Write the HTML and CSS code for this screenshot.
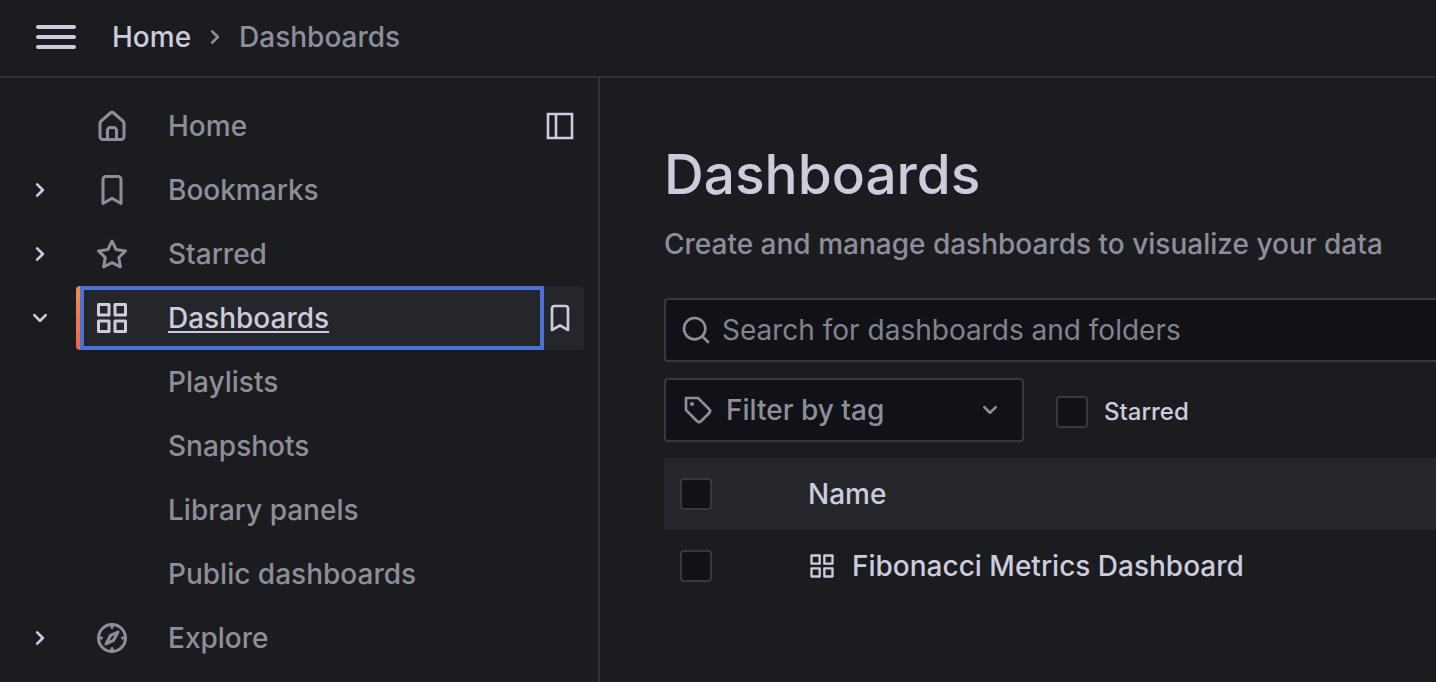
FILE: index.html
```html
<!DOCTYPE html>
<html lang="en">
<head>
<meta charset="utf-8">
<title>Dashboards</title>
<link rel="stylesheet" href="styles.css">
</head>
<body>
<svg class="sprite" aria-hidden="true">
  <symbol id="right" viewBox="0 0 24 24"><path d="M14.83,11.29,10.59,7.05a1,1,0,0,0-1.42,0,1,1,0,0,0,0,1.41L12.71,12,9.17,15.54a1,1,0,0,0,0,1.41,1,1,0,0,0,.71.29,1,1,0,0,0,.71-.29l4.24-4.24A1,1,0,0,0,14.83,11.29Z"/></symbol>
  <symbol id="down" viewBox="0 0 24 24"><path d="M17,9.17a1,1,0,0,0-1.41,0L12,12.71,8.46,9.17a1,1,0,0,0-1.41,0,1,1,0,0,0,0,1.42l4.24,4.24a1,1,0,0,0,1.42,0L17,10.59A1,1,0,0,0,17,9.17Z"/></symbol>
  <symbol id="home" viewBox="0 0 24 24"><path d="M20,8h0L14,2.74a3,3,0,0,0-4,0L4,8a3,3,0,0,0-1,2.26V19a3,3,0,0,0,3,3H18a3,3,0,0,0,3-3V10.25A3,3,0,0,0,20,8ZM14,20H10V15a1,1,0,0,1,1-1h2a1,1,0,0,1,1,1Zm5-1a1,1,0,0,1-1,1H16V15a3,3,0,0,0-3-3H11a3,3,0,0,0-3,3v5H6a1,1,0,0,1-1-1V10.25a1,1,0,0,1,.34-.75l6-5.25a1,1,0,0,1,1.32,0l6,5.25a1,1,0,0,1,.34.75Z"/></symbol>
  <symbol id="bookmark" viewBox="0 0 24 24"><path d="M16,2H8A3,3,0,0,0,5,5V21a1,1,0,0,0,.5.87,1,1,0,0,0,1,0L12,18.69l5.5,3.18A1,1,0,0,0,18,22a1,1,0,0,0,.5-.13A1,1,0,0,0,19,21V5A3,3,0,0,0,16,2Zm1,17.27-4.5-2.6a1,1,0,0,0-1,0L7,19.27V5A1,1,0,0,1,8,4h8a1,1,0,0,1,1,1Z"/></symbol>
  <symbol id="star" viewBox="0 0 24 24"><path d="M22,9.67A1,1,0,0,0,21.14,9l-5.69-.83L12.9,3a1,1,0,0,0-1.8,0L8.55,8.16,2.86,9a1,1,0,0,0-.81.68,1,1,0,0,0,.25,1l4.13,4-1,5.68A1,1,0,0,0,6.9,21.44L12,18.77l5.1,2.67a.93.93,0,0,0,.46.12,1,1,0,0,0,.59-.19,1,1,0,0,0,.4-1l-1-5.68,4.13-4A1,1,0,0,0,22,9.67Zm-6.15,4a1,1,0,0,0-.29.88l.72,4.2-3.76-2a1.06,1.06,0,0,0-.94,0l-3.76,2,.72-4.2a1,1,0,0,0-.29-.88l-3-3,4.21-.61a1,1,0,0,0,.76-.55L12,5.7l1.88,3.82a1,1,0,0,0,.76.55l4.21.61Z"/></symbol>
  <symbol id="apps" viewBox="0 0 24 24"><path d="M10,13H3a1,1,0,0,0-1,1v7a1,1,0,0,0,1,1h7a1,1,0,0,0,1-1V14A1,1,0,0,0,10,13ZM9,20H4V15H9ZM21,2H14a1,1,0,0,0-1,1v7a1,1,0,0,0,1,1h7a1,1,0,0,0,1-1V3A1,1,0,0,0,21,2ZM20,9H15V4h5Zm1,4H14a1,1,0,0,0-1,1v7a1,1,0,0,0,1,1h7a1,1,0,0,0,1-1V14A1,1,0,0,0,21,13Zm-1,7H15V15h5ZM10,2H3A1,1,0,0,0,2,3v7a1,1,0,0,0,1,1h7a1,1,0,0,0,1-1V3A1,1,0,0,0,10,2ZM9,9H4V4H9Z"/></symbol>
  <symbol id="compass" viewBox="0 0 24 24"><g fill="none" stroke="currentColor" stroke-width="2" stroke-linejoin="round" stroke-linecap="round"><circle cx="12" cy="12" r="9"/><path d="M12 3v2M12 19v2M3 12h2M19 12h2M16 8 11 10.3 8 16 13 13.6Z"/></g></symbol>
  <symbol id="search" viewBox="0 0 24 24"><path d="M21.71,20.29,18,16.61A9,9,0,1,0,16.61,18l3.68,3.68a1,1,0,0,0,1.42,0A1,1,0,0,0,21.71,20.29ZM11,18a7,7,0,1,1,7-7A7,7,0,0,1,11,18Z"/></symbol>
  <symbol id="tag" viewBox="0 0 24 24"><path d="M7.5,6A1.5,1.5,0,1,0,9,7.5,1.5,1.5,0,0,0,7.5,6Zm13.62,4.71L12.71,2.29A1,1,0,0,0,12,2H3A1,1,0,0,0,2,3v9a1,1,0,0,0,.29.71l8.42,8.41a3,3,0,0,0,4.24,0L21.12,15a3,3,0,0,0,0-4.24Zm-1.41,2.82h0l-6.18,6.17a1,1,0,0,1-1.41,0L4,11.59V4h7.59l8.12,8.12a1,1,0,0,1,.29.71A1,1,0,0,1,19.71,13.53Z"/></symbol>
  <symbol id="menu" viewBox="0 0 40 24"><rect width="40" height="4" rx="2"/><rect y="10" width="40" height="4" rx="2"/><rect y="20" width="40" height="4" rx="2"/></symbol>
  <symbol id="panel" viewBox="0 0 32 32"><path d="M4 4h24v24H4zM12 4v24" fill="none" stroke="currentColor" stroke-width="2.6"/></symbol>
</svg>

<header class="topbar">
  <button class="icon-button menu-button" aria-label="Toggle menu"><svg class="menu-icon"><use href="#menu"/></svg></button>
  <nav class="breadcrumbs" aria-label="Breadcrumbs">
    <a class="crumb" href="#">Home</a>
    <svg class="icon crumb-arrow"><use href="#right"/></svg>
    <span class="crumb-current">Dashboards</span>
  </nav>
</header>

<div class="layout">
  <nav class="sidebar" aria-label="Main menu">
    <ul class="nav-list">
      <li class="nav-row">
        <span class="toggle"></span>
        <div class="nav-item">
          <a class="nav-link" href="#"><svg class="icon-large"><use href="#home"/></svg>Home</a>
          <button class="icon-button side-action" aria-label="Undock menu"><svg class="icon"><use href="#panel"/></svg></button>
        </div>
      </li>
      <li class="nav-row">
        <button class="icon-button toggle" aria-label="Expand Bookmarks"><svg class="icon"><use href="#right"/></svg></button>
        <div class="nav-item"><a class="nav-link" href="#"><svg class="icon-large"><use href="#bookmark"/></svg>Bookmarks</a></div>
      </li>
      <li class="nav-row">
        <button class="icon-button toggle" aria-label="Expand Starred"><svg class="icon"><use href="#right"/></svg></button>
        <div class="nav-item"><a class="nav-link" href="#"><svg class="icon-large"><use href="#star"/></svg>Starred</a></div>
      </li>
      <li class="nav-row">
        <button class="icon-button toggle" aria-label="Collapse Dashboards"><svg class="icon"><use href="#down"/></svg></button>
        <div class="nav-item active">
          <a class="nav-link" href="#" aria-current="page"><svg class="icon-large"><use href="#apps"/></svg><span class="active-label">Dashboards</span></a>
          <button class="icon-button side-action" aria-label="Bookmark Dashboards"><svg class="icon"><use href="#bookmark"/></svg></button>
        </div>
      </li>
      <li class="nav-row child"><a class="nav-link" href="#">Playlists</a></li>
      <li class="nav-row child"><a class="nav-link" href="#">Snapshots</a></li>
      <li class="nav-row child"><a class="nav-link" href="#">Library panels</a></li>
      <li class="nav-row child"><a class="nav-link" href="#">Public dashboards</a></li>
      <li class="nav-row">
        <button class="icon-button toggle" aria-label="Expand Explore"><svg class="icon"><use href="#right"/></svg></button>
        <div class="nav-item"><a class="nav-link" href="#"><svg class="icon-large"><use href="#compass"/></svg>Explore</a></div>
      </li>
    </ul>
  </nav>

  <main class="content">
    <h1 class="title">Dashboards</h1>
    <p class="subtitle">Create and manage dashboards to visualize your data</p>
    <div class="search">
      <svg class="icon"><use href="#search"/></svg>
      <input class="search-input" type="text" aria-label="Search for dashboards and folders" placeholder="Search for dashboards and folders">
    </div>
    <div class="filters">
      <div class="tag-filter">
        <svg class="icon"><use href="#tag"/></svg>
        <select class="tag-select" aria-label="Filter by tag"><option>Filter by tag</option></select>
        <svg class="icon select-arrow"><use href="#down"/></svg>
      </div>
      <label class="starred"><input class="checkbox" type="checkbox">Starred</label>
    </div>
    <table class="results">
      <thead>
        <tr class="head-row"><th class="check-cell"><input class="checkbox" type="checkbox" aria-label="Select all"></th><th class="name-cell">Name</th></tr>
      </thead>
      <tbody>
        <tr><td class="check-cell"><input class="checkbox" type="checkbox" aria-label="Select Fibonacci Metrics Dashboard"></td><td class="name-cell"><a class="result-link" href="#"><svg class="icon-small"><use href="#apps"/></svg>Fibonacci Metrics Dashboard</a></td></tr>
      </tbody>
    </table>
  </main>
</div>
</body>
</html>
```
FILE: styles.css
```css
:root {
  --bg: #1b1c20;
  --raised: #25262b;
  --field: #111217;
  --line: #303136;
  --field-line: #37383e;
  --text: #ccccdc;
  --muted: #8e8e9a;
}

* { box-sizing: border-box; }

body {
  margin: 0;
  min-height: 100vh;
  display: flex;
  flex-direction: column;
  overflow: hidden;
  background: var(--bg);
  color: var(--text);
  font: 450 28px/44px Inter, sans-serif;
}

a { color: inherit; text-decoration: none; }
svg { fill: currentColor; flex: none; display: block; }
input, select, button { font: inherit; color: inherit; }

.sprite { position: absolute; width: 0; height: 0; }
.icon { width: 32px; height: 32px; }
.icon-large { width: 36px; height: 36px; }
.icon-small { width: 28px; height: 28px; }

.icon-button {
  display: flex;
  align-items: center;
  justify-content: center;
  padding: 0;
  border: 0;
  background: none;
}

.topbar {
  display: flex;
  align-items: center;
  gap: 36px;
  height: 78px;
  padding: 0 36px 2px;
  border-bottom: 2px solid var(--line);
}
.menu-icon { width: 40px; height: 24px; }
.breadcrumbs { display: flex; align-items: center; gap: 8px; }
.crumb-arrow, .crumb-current { color: var(--muted); }

.layout { display: flex; flex: 1; }

.sidebar {
  flex: none;
  width: 600px;
  padding: 16px 14px 0 24px;
  border-right: 2px solid var(--line);
}
.nav-list { margin: 0; padding: 0; list-style: none; }
.nav-row { display: flex; align-items: center; gap: 20px; height: 64px; }
.toggle { flex: none; width: 32px; height: 32px; }
.nav-item { display: flex; flex: 1; height: 64px; color: var(--muted); }
.nav-link {
  display: flex;
  flex: 1;
  align-items: center;
  gap: 38px;
  padding-left: 18px;
}
.child { padding-left: 126px; color: var(--muted); }
.side-action { justify-content: flex-start; width: 40px; color: var(--text); }

.active {
  border-radius: 4px;
  overflow: hidden;
  color: var(--text);
  background: linear-gradient(#f58b46, #f0654a) left / 4px 100% no-repeat var(--raised);
}
.active .nav-link {
  margin-left: 4px;
  padding-left: 10px;
  border: 4px solid #4a72d6;
}
.active-label { text-decoration: underline; text-decoration-thickness: 2px; text-underline-offset: 3px; text-decoration-skip-ink: none; }

.content { flex: 1; min-width: 0; padding: 64px 0 0 64px; }
.title { margin: 0; font-size: 55px; line-height: 64px; font-weight: 450; }
.subtitle { margin: 16px 0 32px; color: var(--muted); white-space: nowrap; }

.search {
  display: flex;
  align-items: center;
  gap: 10px;
  height: 64px;
  padding-left: 14px;
  border: 2px solid var(--field-line);
  border-right: 0;
  border-radius: 4px 0 0 4px;
  background: var(--field);
  color: var(--muted);
}
.search-input { flex: 1; min-width: 0; padding: 0; border: 0; outline: 0; background: none; font-weight: 400; }
.search-input::placeholder { color: #83838e; opacity: 1; }

.filters { display: flex; align-items: center; gap: 32px; margin: 16px 0; }
.tag-filter {
  display: flex;
  align-items: center;
  gap: 12px;
  width: 360px;
  height: 64px;
  padding: 0 16px;
  border: 2px solid var(--field-line);
  border-radius: 4px;
  background: var(--field);
  color: var(--muted);
}
.tag-select { flex: 1; min-width: 0; padding: 0; border: 0; appearance: none; background: none; }
.starred { display: flex; align-items: center; gap: 16px; padding-top: 4px; font-size: 24px; font-weight: 550; }

.checkbox {
  display: block;
  width: 32px;
  height: 32px;
  margin: 0;
  appearance: none;
  border: 2px solid var(--field-line);
  border-radius: 4px;
  background: var(--field);
}

.results { width: 100%; border-collapse: collapse; text-align: left; }
.results tr { height: 72px; }
.head-row { background: var(--raised); }
.check-cell { width: 144px; padding: 0 16px; }
.name-cell { padding: 0; font-weight: 450; }
.result-link { display: flex; align-items: center; gap: 16px; }
```
